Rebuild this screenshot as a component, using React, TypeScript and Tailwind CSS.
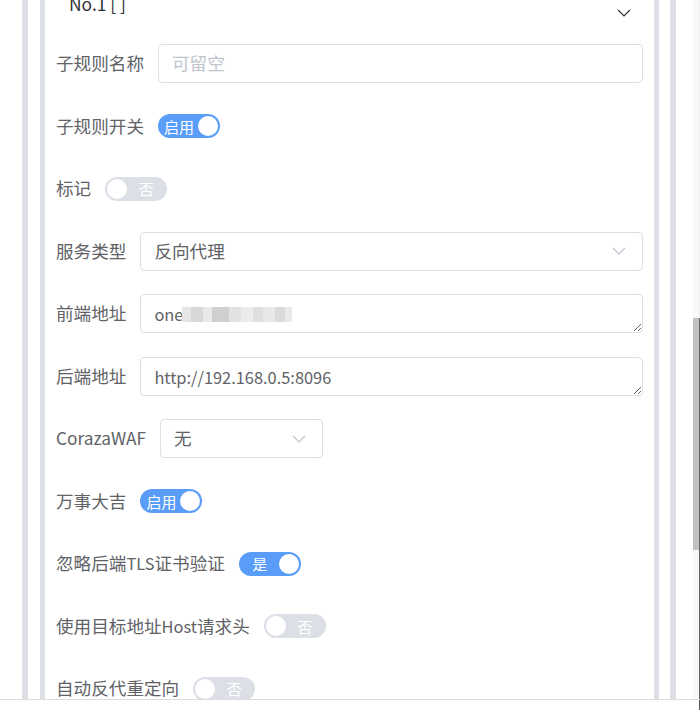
import React from "react";

const font = { fontFamily: '"Noto Sans CJK SC", "Noto Sans", sans-serif' };

function Chevron({ className }: { className?: string }) {
    return (
        <svg className={className} width="14" height="8" viewBox="0 0 14 8" fill="none" stroke="currentColor" strokeWidth={1.2}>
            <path d="M1 1l6 6 6-6" />
        </svg>
    );
}

function Switch({ on, text }: { on: boolean; text: string }) {
    return (
        <div
            className={`w-[62px] h-[24px] rounded-full p-[2px] flex items-center shrink-0 ${on ? "bg-[#5a9df8]" : "bg-[#dcdfe6]"}`}
        >
            {on ? (
                <>
                    <span className="flex-1 text-center text-white text-[15px] leading-none">{text}</span>
                    <span className="w-[20px] h-[20px] rounded-full bg-white" />
                </>
            ) : (
                <>
                    <span className="w-[20px] h-[20px] rounded-full bg-white" />
                    <span className="flex-1 text-center text-white text-[15px] leading-none">{text}</span>
                </>
            )}
        </div>
    );
}

function Row({ label, children }: { label: React.ReactNode; children: React.ReactNode }) {
    return (
        <div className="h-[40px] flex items-center">
            <label className="text-[17.6px] text-[#606266] pr-[14px] whitespace-nowrap shrink-0">{label}</label>
            {children}
        </div>
    );
}

// latin runs in the reference font come out a little narrower
function Latin({ children }: { children: React.ReactNode }) {
    return <span className="text-[16.4px]">{children}</span>;
}

const boxCls = "h-[39px] border border-[#dcdfe6] rounded-[4px] bg-white px-[13px] text-[17.6px] text-[#606266] flex items-center";
const areaCls = "w-full h-[39px] border border-[#dcdfe6] rounded-[4px] px-[13px] py-[7px] text-[16.4px] text-[#606266] outline-none";

export default function App() {
    return (
        <div className="w-[700px] h-[710px] overflow-hidden bg-white flex flex-col" style={font}>
            <div className="h-[699px] flex">
                <div className="flex-1 h-full overflow-hidden pl-[22px] pr-[17px]">
                    <div className="h-full border-x-[6px] border-[#dcdfe6] px-[12px] pr-[11px]">
                        <div className="h-full border-x-[5px] border-[#dcdfe6] px-[11px] overflow-hidden">
                            {/* collapse header */}
                            <div className="-mt-[20px] h-[48px] flex items-center justify-between mb-[15.5px]">
                                <span className="pl-[13px] text-[17.4px] text-[#303133]">No.1 [ ]</span>
                                <Chevron className="text-[#303133] mt-[18px] mr-[12px]" />
                            </div>

                            <div className="flex flex-col gap-[22.5px]">
                                <Row label="子规则名称">
                                    <div className={`${boxCls} flex-1 text-[#c0c4cc]`}>可留空</div>
                                </Row>
                                <Row label="子规则开关">
                                    <Switch on text="启用" />
                                </Row>
                                <Row label="标记">
                                    <Switch on={false} text="否" />
                                </Row>
                                <Row label="服务类型">
                                    <div className={`${boxCls} flex-1 justify-between`}>
                                        <span>反向代理</span>
                                        <Chevron className="text-[#c0c4cc] mr-[3px]" />
                                    </div>
                                </Row>
                                <Row label="前端地址">
                                    <div className="flex-1 relative h-[39px]">
                                        <textarea rows={1} defaultValue="one" className={areaCls} />
                                        <div className="absolute left-[42px] top-[13px] flex h-[15px]">
                                            <span className="w-[9px] bg-[#e6e6e6]" />
                                            <span className="w-[12px] bg-[#d8d8d8]" />
                                            <span className="w-[9px] bg-[#e9e9e9]" />
                                            <span className="w-[17px] bg-[#cfcfcf]" />
                                            <span className="w-[12px] bg-[#e2e2e2]" />
                                            <span className="w-[12px] bg-[#ececec]" />
                                            <span className="w-[10px] bg-[#dfdfdf]" />
                                            <span className="w-[12px] bg-[#e8e8e8]" />
                                            <span className="w-[10px] bg-[#dadada]" />
                                            <span className="w-[7px] bg-[#e9e9e9]" />
                                        </div>
                                    </div>
                                </Row>
                                <Row label="后端地址">
                                    <div className="flex-1 h-[39px]">
                                        <textarea rows={1} defaultValue="http://192.168.0.5:8096" className={areaCls} />
                                    </div>
                                </Row>
                                <Row label={<span className="text-[17.3px]">CorazaWAF</span>}>
                                    <div className={`${boxCls} w-[163px] justify-between`}>
                                        <span>无</span>
                                        <Chevron className="text-[#c0c4cc] mr-[3px]" />
                                    </div>
                                </Row>
                                <Row label="万事大吉">
                                    <Switch on text="启用" />
                                </Row>
                                <Row label={<>忽略后端<Latin>TLS</Latin>证书验证</>}>
                                    <Switch on text="是" />
                                </Row>
                                <Row label={<>使用目标地址<Latin>Host</Latin>请求头</>}>
                                    <Switch on={false} text="否" />
                                </Row>
                                <Row label="自动反代重定向">
                                    <Switch on={false} text="否" />
                                </Row>
                            </div>
                        </div>
                    </div>
                </div>
                {/* scrollbar */}
                <div className="w-[6px] h-full bg-[#f8f8f8] flex flex-col">
                    <div className="h-[318px]" />
                    <div className="h-[232px] bg-[#c1c1c1]" />
                </div>
                <div className="w-[1px] h-full flex flex-col">
                    <div className="h-[318px] bg-[#f0f0f0]" />
                    <div className="flex-1 bg-[#666666]" />
                </div>
            </div>
            <div className="flex-1 border-t border-[#dddddd] bg-white flex justify-end">
                <div className="w-[1px] h-full bg-[#555555]" />
            </div>
        </div>
    );
}
